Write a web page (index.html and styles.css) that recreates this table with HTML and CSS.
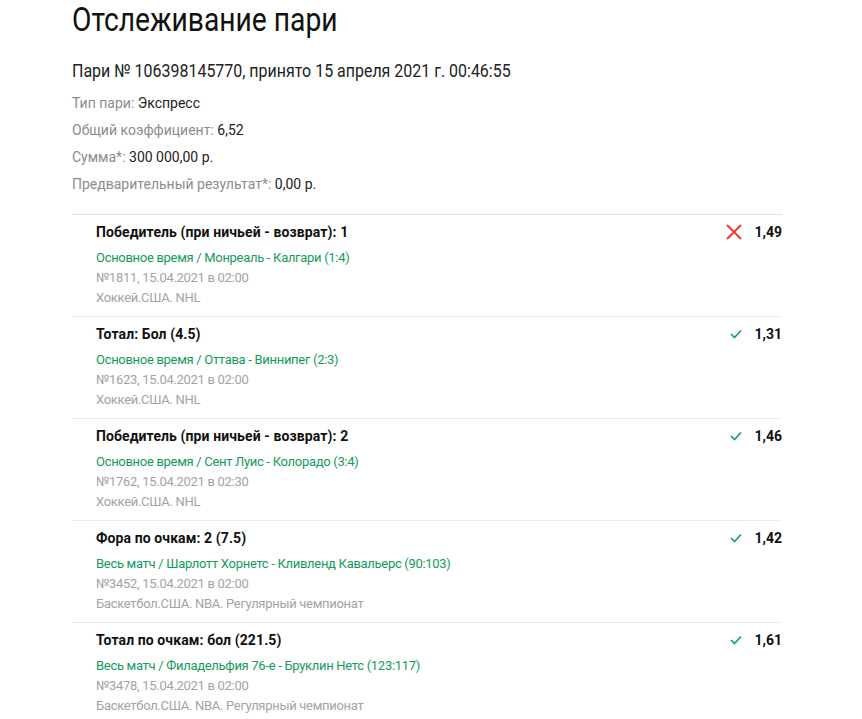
FILE: index.html
```html
<!DOCTYPE html>
<html lang="ru">
<head>
    <meta charset="UTF-8">
    <title>Отслеживание пари</title>
    <link rel="stylesheet" href="styles.css">
</head>
<body>
    <div class="container">
        <h1 class="title"><span class="condensed">Отслеживание пари</span></h1>
        <div class="bet-number"><span class="condensed">Пари № 106398145770, принято 15 апреля 2021 г. 00:46:55</span></div>

        <div class="info">
            <div class="info-row"><span class="label">Тип пари:</span> Экспресс</div>
            <div class="info-row"><span class="label">Общий коэффициент:</span> 6,52</div>
            <div class="info-row"><span class="label">Сумма*:</span> 300 000,00 р.</div>
            <div class="info-row"><span class="label">Предварительный результат*:</span> 0,00 р.</div>
        </div>

        <div class="events">
            <div class="event">
                <div class="event-body">
                    <div class="event-name">Победитель (при ничьей - возврат): 1</div>
                    <div class="event-match">Основное время / Монреаль - Калгари (1:4)</div>
                    <div class="event-meta">№1811, 15.04.2021 в 02:00</div>
                    <div class="event-meta">Хоккей.США. NHL</div>
                </div>
                <div class="event-result">
                    <svg class="icon-lose" width="16" height="16" viewBox="0 0 16 16"><path d="M1 1 L15 15 M15 1 L1 15" stroke="#f03a3a" stroke-width="2" fill="none"/></svg>
                    <span class="odds">1,49</span>
                </div>
            </div>
            <div class="event">
                <div class="event-body">
                    <div class="event-name">Тотал: Бол (4.5)</div>
                    <div class="event-match">Основное время / Оттава - Виннипег (2:3)</div>
                    <div class="event-meta">№1623, 15.04.2021 в 02:00</div>
                    <div class="event-meta">Хоккей.США. NHL</div>
                </div>
                <div class="event-result">
                    <svg class="icon-win" width="12" height="10" viewBox="0 0 12 10"><path d="M1 5 L4.5 8.5 L11 1.5" stroke="#12a060" stroke-width="1.6" fill="none"/></svg>
                    <span class="odds">1,31</span>
                </div>
            </div>
            <div class="event">
                <div class="event-body">
                    <div class="event-name">Победитель (при ничьей - возврат): 2</div>
                    <div class="event-match">Основное время / Сент Луис - Колорадо (3:4)</div>
                    <div class="event-meta">№1762, 15.04.2021 в 02:30</div>
                    <div class="event-meta">Хоккей.США. NHL</div>
                </div>
                <div class="event-result">
                    <svg class="icon-win" width="12" height="10" viewBox="0 0 12 10"><path d="M1 5 L4.5 8.5 L11 1.5" stroke="#12a060" stroke-width="1.6" fill="none"/></svg>
                    <span class="odds">1,46</span>
                </div>
            </div>
            <div class="event">
                <div class="event-body">
                    <div class="event-name">Фора по очкам: 2 (7.5)</div>
                    <div class="event-match">Весь матч / Шарлотт Хорнетс - Кливленд Кавальерс (90:103)</div>
                    <div class="event-meta">№3452, 15.04.2021 в 02:00</div>
                    <div class="event-meta">Баскетбол.США. NBA. Регулярный чемпионат</div>
                </div>
                <div class="event-result">
                    <svg class="icon-win" width="12" height="10" viewBox="0 0 12 10"><path d="M1 5 L4.5 8.5 L11 1.5" stroke="#12a060" stroke-width="1.6" fill="none"/></svg>
                    <span class="odds">1,42</span>
                </div>
            </div>
            <div class="event">
                <div class="event-body">
                    <div class="event-name">Тотал по очкам: бол (221.5)</div>
                    <div class="event-match">Весь матч / Филадельфия 76-е - Бруклин Нетс (123:117)</div>
                    <div class="event-meta">№3478, 15.04.2021 в 02:00</div>
                    <div class="event-meta">Баскетбол.США. NBA. Регулярный чемпионат</div>
                </div>
                <div class="event-result">
                    <svg class="icon-win" width="12" height="10" viewBox="0 0 12 10"><path d="M1 5 L4.5 8.5 L11 1.5" stroke="#12a060" stroke-width="1.6" fill="none"/></svg>
                    <span class="odds">1,61</span>
                </div>
            </div>
        </div>
    </div>
</body>
</html>
```

FILE: styles.css
```css
body {
    font-family: Roboto, "Liberation Sans", sans-serif;
    background-color: #fff;
    color: #1a1a1a;
    margin: 0;
    padding: 0;
}
.container {
    width: 710px;
    padding: 0 72px;
}
/* headings use a narrow face in the original, squeeze Roboto instead */
.condensed {
    display: inline-block;
    white-space: nowrap;
    transform-origin: left center;
}
.title {
    font-size: 33px;
    font-weight: 400;
    line-height: 40px;
    margin: 0;
    color: #111;
}
.title .condensed {
    transform: scaleX(0.855);
}
.bet-number {
    font-size: 18px;
    line-height: 24px;
    margin-top: 19px;
    color: #222;
}
.bet-number .condensed {
    transform: scaleX(0.887);
}
.info {
    margin-top: 7px;
    margin-bottom: 16px;
}
.info-row {
    font-size: 14px;
    line-height: 27px;
    color: #222;
}
.label {
    color: #8c8c8c;
}
.events {
    border-top: 1px solid #e2e2e2;
}
.event {
    display: flex;
    justify-content: space-between;
    padding: 7px 0 8px 24px;
    border-bottom: 1px solid #ececec;
}
.event-name {
    font-size: 14px;
    font-weight: 700;
    line-height: 20px;
    letter-spacing: 0.1px;
    margin-bottom: 6px;
    color: #111;
}
.event-match {
    font-size: 13px;
    line-height: 20px;
    letter-spacing: -0.3px;
    color: #139b5c;
}
.event-meta {
    font-size: 13px;
    line-height: 20px;
    letter-spacing: -0.3px;
    color: #a3a3a3;
}
.event-result {
    display: flex;
    align-items: center;
    gap: 12px;
    height: 20px;
}
.odds {
    font-size: 14px;
    font-weight: 700;
    color: #111;
}
```
